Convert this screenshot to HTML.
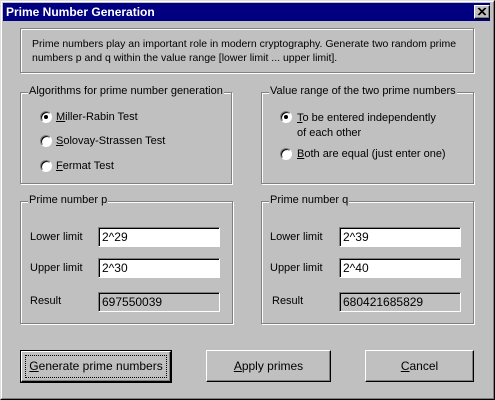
<!DOCTYPE html>
<html><head><style>
*{box-sizing:border-box}
html,body{margin:0;width:495px;height:400px;overflow:hidden}
body{background:#c0c0c0;font-family:"Liberation Sans",Arial,sans-serif;font-size:11px;color:#000;position:relative}
.win{position:absolute;left:0;top:0;width:495px;height:400px;border:1px solid;border-color:#dfdfdf #000 #000 #dfdfdf}
.win2{position:absolute;left:0;top:0;right:0;bottom:0;border:1px solid;border-color:#fff #808080 #808080 #fff}
.title{position:absolute;left:3px;top:3px;width:487px;height:18px;background:#000080;color:#fff;font-weight:bold;font-size:12px;line-height:18px;padding-left:3px}
.close{position:absolute;left:474px;top:5px;width:16px;height:14px;background:#c0c0c0;border:1px solid;border-color:#fff #000 #000 #fff;box-shadow:inset -1px -1px #808080}
.a{position:absolute;white-space:nowrap}
.etch{position:absolute;border:1px solid #808080;box-shadow:1px 1px 0 #fff, inset 1px 1px 0 #fff}
.leg{position:absolute;background:#c0c0c0;padding:0 1px;line-height:13px;white-space:nowrap}
.radio{position:absolute;width:12px;height:12px;border-radius:50%;background:#fff;border:1px solid;border-color:#808080 #fff #fff #808080;box-shadow:inset 1px 1px #000}
.radio.on::after{content:"";position:absolute;left:3px;top:3px;width:4px;height:4px;border-radius:50%;background:#000}
.inp{position:absolute;height:20px;background:#fff;border:1px solid;border-color:#808080 #fff #fff #808080;box-shadow:inset 1px 1px #000;padding-left:3px;line-height:18px;font-size:12px}
.inp.ro{background:#c0c0c0}
.btn{position:absolute;border:1px solid;border-color:#fff #000 #000 #fff;box-shadow:inset -1px -1px #808080;text-align:center;font-size:12px;white-space:nowrap}
u{text-decoration:underline}
</style></head><body>
<div class="win"><div class="win2"></div></div>
<div class="title">Prime Number Generation</div>
<div class="close"><svg width="14" height="12" style="position:absolute;left:0;top:0"><path d="M3 2l7 7M4 2l7 7M10 2l-7 7M11 2l-7 7" stroke="#000" stroke-width="1"/></svg></div>

<div class="etch" style="left:20px;top:28px;width:454px;height:45px"></div>
<div class="a" style="left:32px;top:37px;line-height:14px;font-size:10.5px">Prime numbers play an important role in modern cryptography. Generate two random prime<br>numbers p and q within the value range [lower limit ... upper limit].</div>

<div class="etch" style="left:20px;top:92px;width:212px;height:92px"></div>
<div class="leg" style="left:28px;top:85px">Algorithms for prime number generation</div>
<div class="radio on" style="left:40px;top:111px"></div><div class="a" style="left:56px;top:111px"><u>M</u>iller-Rabin Test</div>
<div class="radio" style="left:40px;top:135px"></div><div class="a" style="left:56px;top:135px"><u>S</u>olovay-Strassen Test</div>
<div class="radio" style="left:40px;top:160px"></div><div class="a" style="left:56px;top:160px"><u>F</u>ermat Test</div>

<div class="etch" style="left:261px;top:92px;width:213px;height:92px"></div>
<div class="leg" style="left:269px;top:85px">Value range of the two prime numbers</div>
<div class="radio on" style="left:280px;top:111px"></div><div class="a" style="left:297px;top:111px;line-height:15px"><u>T</u>o be entered independently<br>of each other</div>
<div class="radio" style="left:280px;top:148px"></div><div class="a" style="left:297px;top:148px"><u>B</u>oth are equal (just enter one)</div>

<div class="etch" style="left:20px;top:201px;width:213px;height:123px"></div>
<div class="leg" style="left:28px;top:194px">Prime number p</div>
<div class="a" style="left:30px;top:231px">Lower limit</div><div class="inp" style="left:98px;top:227px;width:122px">2^29</div>
<div class="a" style="left:30px;top:262px">Upper limit</div><div class="inp" style="left:98px;top:258px;width:122px">2^30</div>
<div class="a" style="left:30px;top:295px">Result</div><div class="inp ro" style="left:98px;top:292px;width:122px">697550039</div>

<div class="etch" style="left:261px;top:201px;width:213px;height:123px"></div>
<div class="leg" style="left:269px;top:194px">Prime number q</div>
<div class="a" style="left:270px;top:231px">Lower limit</div><div class="inp" style="left:339px;top:227px;width:122px">2^39</div>
<div class="a" style="left:270px;top:262px">Upper limit</div><div class="inp" style="left:339px;top:258px;width:122px">2^40</div>
<div class="a" style="left:272px;top:295px">Result</div><div class="inp ro" style="left:339px;top:292px;width:122px">680421685829</div>

<div class="a" style="left:20px;top:350px;width:152px;height:33px;border:1px solid #000"></div>
<div class="btn" style="left:21px;top:351px;width:150px;height:31px;line-height:29px"></div>
<div class="a" style="left:25px;top:355px;width:142px;height:23px;border:1px dotted #000"></div>
<div class="a" style="left:21px;top:351px;width:150px;height:31px;line-height:30px;text-align:center;font-size:12px"><u>G</u>enerate prime numbers</div>
<div class="btn" style="left:206px;top:350px;width:125px;height:32px;line-height:30px"><u>A</u>pply primes</div>
<div class="btn" style="left:365px;top:350px;width:109px;height:32px;line-height:30px"><u>C</u>ancel</div>
</body></html>
